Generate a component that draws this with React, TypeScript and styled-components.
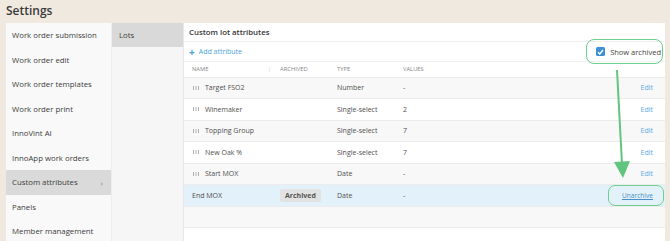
import React from 'react';
import styled, { createGlobalStyle } from 'styled-components';

const GlobalStyle = createGlobalStyle`
  html, body {
    margin: 0;
    padding: 0;
    background: #efe9df;
    font-family: 'Open Sans', 'Liberation Sans', sans-serif;
    color: #4a4a4a;
  }
  * { box-sizing: border-box; }
`;

const Page = styled.div`
  position: relative;
  width: 670px;
  height: 241px;
  overflow: hidden;
  display: flex;
  flex-direction: column;
`;

const Title = styled.h1`
  flex-shrink: 0;
  margin: 0;
  height: 23px;
  padding: 2px 6px 0;
  font-size: 12px;
  font-weight: 600;
  line-height: 17px;
  color: #3a3a3a;
`;

const Body = styled.div`
  flex: 1;
  display: flex;
  margin: 0 5px 0 6px;
`;

const Sidebar = styled.nav`
  width: 105px;
  background: #f9f9f9;
  display: flex;
  flex-direction: column;
`;

const NavItem = styled.div<{ active?: boolean }>`
  height: 24.5px;
  flex-shrink: 0;
  display: flex;
  align-items: center;
  justify-content: space-between;
  padding: 0 8px 0 6px;
  font-size: 7.8px;
  color: #3c3c3c;
  background: ${({ active }) => (active ? '#dadada' : 'transparent')};
`;

const Chevron = styled.span`
  font-size: 8px;
  color: #777;
`;

const SubNav = styled.nav`
  width: 73px;
  background: #f6f6f6;
  border-left: 1px solid #eeeeee;
  border-right: 1px solid #e8e8e8;
`;

const SubItem = styled.div<{ active?: boolean }>`
  height: 24px;
  display: flex;
  align-items: center;
  padding-left: 7px;
  font-size: 7.8px;
  color: #3c3c3c;
  background: ${({ active }) => (active ? '#d9d9d9' : 'transparent')};
`;

const Main = styled.section`
  flex: 1;
  background: #fff;
  display: flex;
  flex-direction: column;
`;

const PanelHeader = styled.div`
  height: 19px;
  flex-shrink: 0;
  display: flex;
  align-items: center;
  padding-left: 5px;
  font-size: 7.8px;
  font-weight: 600;
  color: #333;
  border-bottom: 1px solid #eeeeee;
`;

const Toolbar = styled.div`
  height: 20px;
  flex-shrink: 0;
  display: flex;
  align-items: center;
  justify-content: space-between;
  padding: 0 4px 0 5px;
  border-bottom: 1px solid #eeeeee;
`;

const AddLink = styled.span`
  display: flex;
  align-items: center;
  gap: 4px;
  font-size: 7px;
  color: #4a9fd8;
`;

const Plus = styled.span`
  font-size: 10px;
  font-weight: 700;
  line-height: 1;
`;

const ArchivedToggle = styled.label`
  position: relative;
  display: flex;
  align-items: center;
  gap: 5px;
  font-size: 7.5px;
  color: #444;

  &::after {
    content: '';
    position: absolute;
    inset: -7.5px -2px -7.5px -10px;
    border: 1.5px solid #6fcf8c;
    border-radius: 8px;
  }
`;

const CheckBox = styled.span`
  width: 9px;
  height: 9px;
  border-radius: 1.5px;
  background: #3d8fd6;
  display: flex;
  align-items: center;
  justify-content: center;
`;

const Row = styled.div<{ tone?: 'grey' | 'white' | 'blue'; head?: boolean }>`
  height: ${({ head }) => (head ? '15.5px' : '21.5px')};
  flex-shrink: 0;
  display: grid;
  grid-template-columns: 88px 57px 66px 1fr auto;
  align-items: center;
  padding: 0 12px 0 8px;
  border-bottom: 1px solid #ececec;
  font-size: ${({ head }) => (head ? '5.8px' : '7px')};
  color: ${({ head }) => (head ? '#888' : '#4f4f4f')};
  text-transform: ${({ head }) => (head ? 'uppercase' : 'none')};
  background: ${({ tone }) =>
    tone === 'grey' ? '#f8f8f8' : tone === 'blue' ? '#e3f2fa' : '#fff'};
`;

const NameCell = styled.span`
  display: flex;
  align-items: center;
  gap: 6px;
  padding-left: 1px;
`;

const HeadName = styled.span`
  display: flex;
  justify-content: space-between;
  padding-right: 9px;
`;

const Divider = styled.span`
  color: #ccc;
`;

const Badge = styled.span`
  justify-self: start;
  background: #e2e2e2;
  border-radius: 2px;
  padding: 2px 5px;
  font-weight: 700;
  color: #555;
  font-size: 7px;
`;

const EditLink = styled.span<{ ring?: boolean }>`
  position: relative;
  font-size: ${({ ring }) => (ring ? '6.6px' : '7px')};
  text-decoration: ${({ ring }) => (ring ? 'underline' : 'none')};
  color: ${({ ring }) => (ring ? '#4a8fc6' : '#5aaae0')};

  &::after {
    content: ${({ ring }) => (ring ? "''" : 'none')};
    position: absolute;
    inset: -6px -11px -6px -14px;
    border: 1.5px solid #6fcf8c;
    border-radius: 7px;
  }
`;

const Arrow = styled.svg`
  position: absolute;
  left: 608px;
  top: 68px;
`;

const Handle = () => (
  <svg width="6" height="4" viewBox="0 0 6 4">
    <rect x="0" y="0" width="1" height="4" fill="#b0b0b0" />
    <rect x="2.5" y="0" width="1" height="4" fill="#b0b0b0" />
    <rect x="5" y="0" width="1" height="4" fill="#b0b0b0" />
  </svg>
);

const navItems = [
  'Work order submission',
  'Work order edit',
  'Work order templates',
  'Work order print',
  'InnoVint AI',
  'InnoApp work orders',
  'Custom attributes',
  'Panels',
  'Member management',
];

const rows = [
  { name: 'Target FSO2', type: 'Number', values: '-' },
  { name: 'Winemaker', type: 'Single-select', values: '2' },
  { name: 'Topping Group', type: 'Single-select', values: '7' },
  { name: 'New Oak %', type: 'Single-select', values: '7' },
  { name: 'Start MOX', type: 'Date', values: '-' },
];

export default function App() {
  return (
    <Page>
      <GlobalStyle />
      <Title>Settings</Title>
      <Body>
        <Sidebar>
          {navItems.map((item) => (
            <NavItem key={item} active={item === 'Custom attributes'}>
              <span>{item}</span>
              {item === 'Custom attributes' && <Chevron>›</Chevron>}
            </NavItem>
          ))}
        </Sidebar>
        <SubNav>
          <SubItem active>Lots</SubItem>
        </SubNav>
        <Main>
          <PanelHeader>Custom lot attributes</PanelHeader>
          <Toolbar>
            <AddLink>
              <Plus>+</Plus>
              Add attribute
            </AddLink>
            <ArchivedToggle>
              <CheckBox>
                <svg width="7" height="6" viewBox="0 0 7 6">
                  <path d="M1 3.2 L2.8 5 L6 1" stroke="#fff" strokeWidth="1.4" fill="none" />
                </svg>
              </CheckBox>
              Show archived
            </ArchivedToggle>
          </Toolbar>
          <Row head>
            <HeadName>
              <span>Name</span>
              <Divider>|</Divider>
            </HeadName>
            <span>Archived</span>
            <span>Type</span>
            <span>Values</span>
            <span />
          </Row>
          {rows.map((r, i) => (
            <Row key={r.name} tone={i % 2 === 0 ? 'grey' : 'white'}>
              <NameCell>
                <Handle />
                {r.name}
              </NameCell>
              <span />
              <span>{r.type}</span>
              <span>{r.values}</span>
              <EditLink>Edit</EditLink>
            </Row>
          ))}
          <Row tone="blue">
            <span>End MOX</span>
            <Badge>Archived</Badge>
            <span>Date</span>
            <span>-</span>
            <EditLink ring>Unarchive</EditLink>
          </Row>
          <Row tone="grey" />
        </Main>
      </Body>
      <Arrow width="24" height="112" viewBox="0 0 24 112">
        <path d="M9 2 L14 96" stroke="#62c57f" strokeWidth="2" fill="none" />
        <path d="M6 94 L22 93 L15 110 Z" fill="#62c57f" />
      </Arrow>
    </Page>
  );
}
